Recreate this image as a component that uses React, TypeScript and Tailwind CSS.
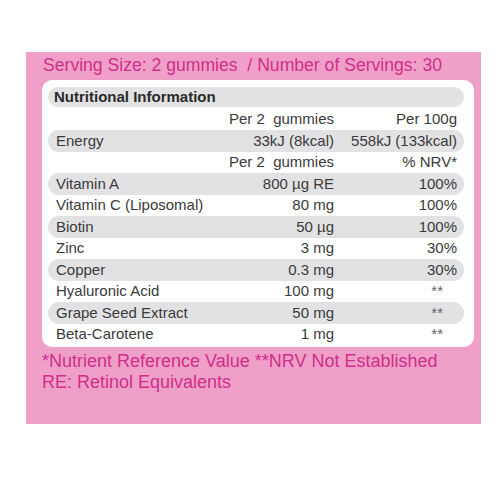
const rows = [
  { label: "", a: "Per 2  gummies", b: "Per 100g", shade: false },
  { label: "Energy", a: "33kJ (8kcal)", b: "558kJ (133kcal)", shade: true },
  { label: "", a: "Per 2  gummies", b: "% NRV*", shade: false },
  { label: "Vitamin A", a: "800 µg RE", b: "100%", shade: true },
  { label: "Vitamin C (Liposomal)", a: "80 mg", b: "100%", shade: false },
  { label: "Biotin", a: "50 µg", b: "100%", shade: true },
  { label: "Zinc", a: "3 mg", b: "30%", shade: false },
  { label: "Copper", a: "0.3 mg", b: "30%", shade: true },
  { label: "Hyaluronic Acid", a: "100 mg", b: "**", shade: false },
  { label: "Grape Seed Extract", a: "50 mg", b: "**", shade: true },
  { label: "Beta-Carotene", a: "1 mg", b: "**", shade: false },
]

export default function App() {
  return (
    <div className="w-full h-[477px] bg-white pt-[52px] pl-[26px] font-['Liberation_Sans',Arial,sans-serif]">
      <div className="w-[455px] h-[372px] bg-[#f0a0c8] pt-[2px]">
        <p className="pl-[17px] text-[17.6px] leading-[22px] text-[#d02e8c] whitespace-pre">
          Serving Size: 2 gummies  / Number of Servings: 30
        </p>
        <div className="ml-[16px] mt-[4px] w-[432px] bg-white rounded-[10px] pt-[7px] pb-[2px] pl-[6px] pr-[10px] text-[15px] text-[#3a3a3a]">
          <div className="h-[20px] mb-[1.5px] rounded-full bg-[#e2e2e4] flex items-center pl-[6px] font-bold text-[#2a2a2a]">
            Nutritional Information
          </div>
          {rows.map((r, i) => (
            <div
              key={i}
              className={`h-[21.5px] flex items-center rounded-full whitespace-nowrap ${r.shade ? "bg-[#e2e2e4]" : ""}`}
            >
              <span className="flex-1 pl-[8px]">{r.label}</span>
              <span className="w-[120px] text-right whitespace-pre">{r.a}</span>
              <span className={`w-[130px] text-right ${r.b === "**" ? "pr-[21px] text-[#666]" : "pr-[7px]"}`}>{r.b}</span>
            </div>
          ))}
        </div>
        <div className="pl-[16px] mt-[4px] text-[18px] leading-[21px] text-[#d02e8c]">
          <p>*Nutrient Reference Value **NRV Not Established</p>
          <p>RE: Retinol Equivalents</p>
        </div>
      </div>
    </div>
  )
}
